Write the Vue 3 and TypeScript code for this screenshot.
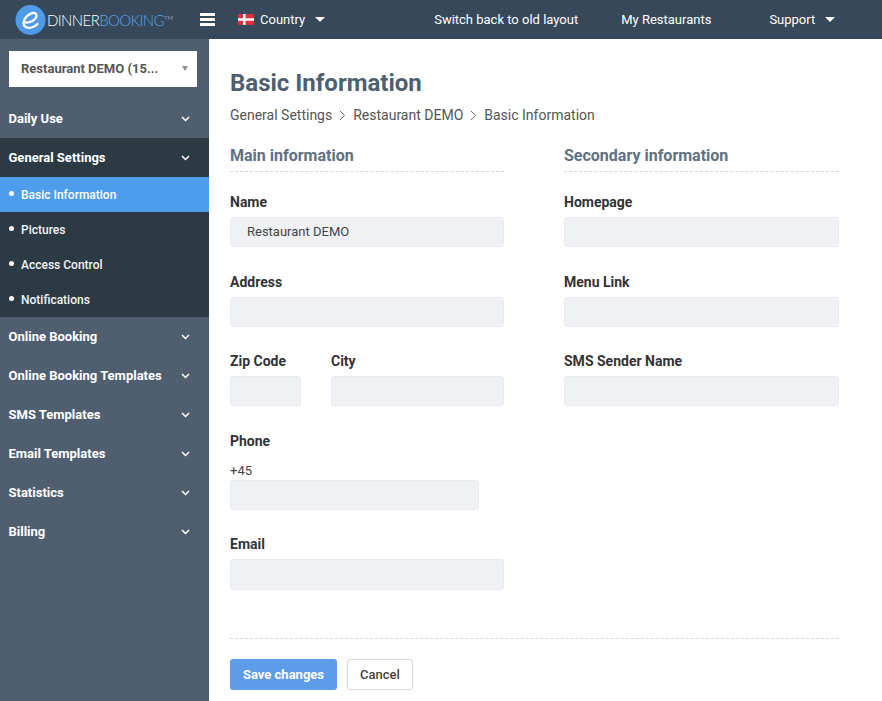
<script setup lang="ts">
const before: string[] = ['Daily Use']
const after: string[] = ['Online Booking', 'Online Booking Templates', 'SMS Templates', 'Email Templates', 'Statistics', 'Billing']
const subs: string[] = ['Basic Information', 'Pictures', 'Access Control', 'Notifications']
</script>

<template>
  <div class="page">
    <header class="top">
      <div class="logo">
        <svg class="logo-mark" width="32" height="32" viewBox="0 0 32 32">
          <circle cx="16.500" cy="16" r="15" fill="#4f9be8" />
          <path d="M12 18.500C16 18.800 21.500 16 22.500 12.500C23 10 21 8.500 18.500 9C14 10 9.500 14.500 9.500 19C9.500 22.800 13 24.500 17.500 23.500C20 22.900 22 21.700 23.500 20" fill="none" stroke="#fff" stroke-width="2.300" stroke-linecap="round" />
        </svg>
        <span class="logo-text"><span class="w">DINNER</span><span class="b">BOOKING</span><sup>TM</sup></span>
      </div>
      <svg class="burger" width="15" height="13" viewBox="0 0 15 13">
        <rect width="15" height="3" rx="0.500" fill="#fff" />
        <rect y="5" width="15" height="3" rx="0.500" fill="#fff" />
        <rect y="10" width="15" height="3" rx="0.500" fill="#fff" />
      </svg>
      <svg class="flag" width="16" height="11" viewBox="0 0 16 11">
        <rect width="16" height="11" rx="1" fill="#d8323f" />
        <rect x="5" width="2.500" height="11" fill="#fff" />
        <rect y="4.250" width="16" height="2.500" fill="#fff" />
      </svg>
      <span class="nav country">Country</span>
      <span class="caret"></span>
      <span class="nav old">Switch back to old layout</span>
      <span class="nav rest">My Restaurants</span>
      <span class="nav support">Support</span>
      <span class="caret"></span>
    </header>

    <div class="body">
      <aside class="side">
        <div class="select">
          <span>Restaurant DEMO (15...</span>
          <i class="sel-caret"></i>
        </div>
        <div v-for="m in before" :key="m" class="item">
          <span>{{ m }}</span>
          <svg class="chev" width="9" height="6" viewBox="0 0 9 6"><path d="M1 1l3.500 3.500L8 1" fill="none" stroke="#fff" stroke-width="1.500" /></svg>
        </div>
        <div class="group">
          <div class="item">
            <span>General Settings</span>
            <svg class="chev" width="9" height="6" viewBox="0 0 9 6"><path d="M1 1l3.500 3.500L8 1" fill="none" stroke="#fff" stroke-width="1.500" /></svg>
          </div>
          <div v-for="(s, i) in subs" :key="s" class="sub" :class="{ active: i === 0 }">
            <i class="dot"></i>{{ s }}
          </div>
        </div>
        <div v-for="m in after" :key="m" class="item">
          <span>{{ m }}</span>
          <svg class="chev" width="9" height="6" viewBox="0 0 9 6"><path d="M1 1l3.500 3.500L8 1" fill="none" stroke="#fff" stroke-width="1.500" /></svg>
        </div>
      </aside>

      <main class="main">
        <h1>Basic Information</h1>
        <div class="crumbs">
          <span>General Settings</span>
          <svg width="7" height="11" viewBox="0 0 7 11"><path d="M1 1l4.500 4.500L1 10" fill="none" stroke="#666" stroke-width="1" /></svg>
          <span>Restaurant DEMO</span>
          <svg width="7" height="11" viewBox="0 0 7 11"><path d="M1 1l4.500 4.500L1 10" fill="none" stroke="#666" stroke-width="1" /></svg>
          <span>Basic Information</span>
        </div>

        <div class="cols">
          <section>
            <h2>Main information</h2>
            <label>Name</label>
            <div class="input filled">Restaurant DEMO</div>
            <label>Address</label>
            <div class="input short-gap"></div>
            <div class="zip">
              <div>
                <label>Zip Code</label>
                <div class="input"></div>
              </div>
              <div>
                <label>City</label>
                <div class="input"></div>
              </div>
            </div>
            <label>Phone</label>
            <div class="prefix">+45</div>
            <div class="input phone"></div>
            <label class="email">Email</label>
            <div class="input tall"></div>
          </section>
          <section>
            <h2>Secondary information</h2>
            <label>Homepage</label>
            <div class="input"></div>
            <label>Menu Link</label>
            <div class="input short-gap"></div>
            <label>SMS Sender Name</label>
            <div class="input"></div>
          </section>
        </div>

        <div class="actions">
          <button class="save" type="button">Save changes</button>
          <button class="cancel" type="button">Cancel</button>
        </div>
      </main>
    </div>
  </div>
</template>

<style>
html, body { margin: 0; background: #fff; }
</style>

<style scoped>
.page {
  width: 882px;
  height: 701px;
  overflow: hidden;
  font-family: Roboto, "Liberation Sans", sans-serif;
  color: #333;
}
.top {
  height: 39px;
  background: #36485a;
  display: flex;
  align-items: center;
  color: #fff;
  font-size: 13px;
}
.logo { display: flex; align-items: center; margin-left: 14px; width: 186px; }
.logo-mark { flex: none; }
.logo-text {
  margin-left: 1px;
  font-family: Lato, sans-serif;
  font-weight: 300;
  font-size: 15px;
  letter-spacing: -0.6px;
  white-space: nowrap;
}
.logo-text .w { color: #fff; }
.logo-text .b { color: #5aa5e8; }
.logo-text sup { font-size: 6px; color: #cfd8e0; vertical-align: 6px; letter-spacing: 0; line-height: 0; }
.burger { flex: none; }
.flag { flex: none; margin-left: 23px; }
.nav { white-space: nowrap; }
.country { margin-left: 6px; }
.caret {
  width: 0;
  height: 0;
  border-left: 5px solid transparent;
  border-right: 5px solid transparent;
  border-top: 5px solid #fff;
  margin-left: 10px;
}
.old { margin-left: 109px; }
.rest { margin-left: 43px; }
.support { margin-left: 58px; }
.body { display: flex; height: 662px; }
.side {
  width: 209px;
  flex: none;
  background: #4f5f70;
  padding-top: 12px;
  box-sizing: border-box;
  color: #fff;
}
.select {
  margin: 0 12px 12px 9px;
  height: 36px;
  background: #fff;
  color: #555;
  font-size: 13px;
  font-weight: 700;
  display: flex;
  align-items: center;
  justify-content: space-between;
  padding: 0 9px 2px 12px;
  box-sizing: border-box;
}
.sel-caret {
  width: 0;
  height: 0;
  border-left: 3.500px solid transparent;
  border-right: 3.500px solid transparent;
  border-top: 5px solid #8a8f94;
}
.item {
  height: 39px;
  display: flex;
  align-items: center;
  justify-content: space-between;
  padding: 0 19px 0 8.500px;
  font-size: 13px;
  font-weight: 700;
}
.group { background: #2c3a44; }
.sub {
  height: 35px;
  display: flex;
  align-items: center;
  padding-left: 9px;
  font-size: 12px;
  font-weight: 500;
  color: #f2f4f6;
}
.sub.active { background: #4e9ded; color: #fff; }
.dot {
  width: 5px;
  height: 5px;
  border-radius: 50%;
  background: #fff;
  margin-right: 7px;
  position: relative;
  top: -1px;
}
.main {
  flex: 1;
  padding: 0 43px 0 21px;
  box-sizing: border-box;
}
h1 {
  margin: 30px 0 0;
  height: 28px;
  line-height: 28px;
  font-size: 24px;
  font-weight: 700;
  color: #4f5f70;
}
.crumbs {
  display: flex;
  align-items: center;
  gap: 7px;
  margin-top: 8px;
  height: 20px;
  font-size: 14px;
  color: #555;
}
.cols { display: grid; grid-template-columns: 274px 275px; column-gap: 60px; margin-top: 20px; }
h2 {
  height: 22px;
  line-height: 22px;
  font-size: 16px;
  font-weight: 700;
  color: #5f7082;
  margin: 0 0 20px;
  padding-bottom: 4px;
  border-bottom: 1px dashed #d4d6d9;
}
label {
  display: block;
  height: 20px;
  line-height: 20px;
  font-size: 14px;
  font-weight: 700;
  color: #333;
  margin-bottom: 5px;
}
.input {
  height: 30px;
  background: #f0f1f4;
  border: 1px solid #e9eaee;
  border-radius: 3px;
  box-sizing: border-box;
  margin-bottom: 25px;
  font-size: 13px;
  line-height: 28px;
  color: #444;
}
.input.short-gap { margin-bottom: 24px; }
.input.filled { padding-left: 16px; }
.zip { display: grid; grid-template-columns: 71px 173px; column-gap: 30px; }
.prefix { font-size: 13px; height: 14px; line-height: 14px; margin: 13px 0 2px; color: #444; }
.phone { width: 249px; margin-bottom: 24px; }
.tall { height: 31px; margin-bottom: 0; }
.actions {
  margin-top: 48px;
  border-top: 1px dashed #d4d6d9;
  padding-top: 20px;
  display: flex;
  gap: 10px;
}
button {
  height: 31px;
  border-radius: 3px;
  font-family: inherit;
  font-size: 13px;
  padding: 0;
  box-sizing: border-box;
}
.save { width: 107px; background: #5598e6; border: 0; color: #fff; font-weight: 700; opacity: 0.95; }
.cancel { width: 66px; background: #fff; border: 1px solid #d8d8d8; color: #444; font-weight: 500; }
</style>
